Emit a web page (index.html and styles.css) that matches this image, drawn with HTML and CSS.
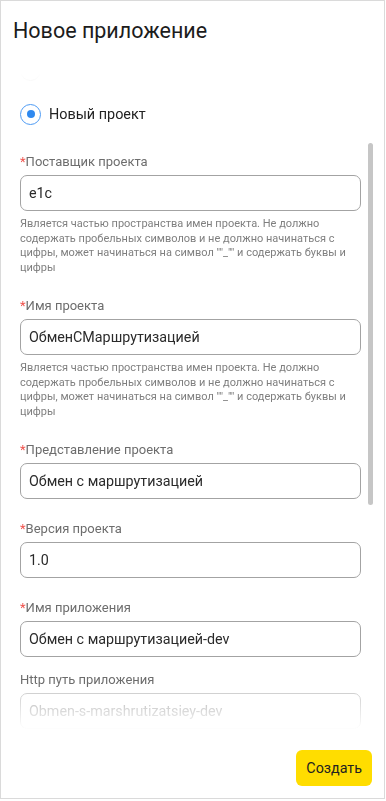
FILE: index.html
```html
<!DOCTYPE html>
<html lang="ru">
<head>
    <meta charset="UTF-8">
    <title>Новое приложение</title>
    <link rel="stylesheet" href="styles.css">
</head>
<body>
    <div class="dialog">
        <div class="dialog-header">
            <h1 class="dialog-title">Новое приложение</h1>
        </div>

        <div class="dialog-body">
            <div class="dialog-scroll">
                <!-- верхний вариант почти скрыт затуханием -->
                <div class="radio">
                    <span class="radio-mark"></span>
                </div>
                <label class="radio radio--checked">
                    <span class="radio-mark"></span>
                    <span class="radio-text">Новый проект</span>
                </label>

                <div class="field field--first">
                    <div class="field-label"><span class="req">*</span>Поставщик проекта</div>
                    <input class="input" type="text" value="e1c">
                    <div class="field-hint">Является частью пространства имен проекта. Не должно содержать пробельных символов и не должно начинаться с цифры, может начинаться на символ ""_"" и содержать буквы и цифры</div>
                </div>

                <div class="field field--after-hint">
                    <div class="field-label"><span class="req">*</span>Имя проекта</div>
                    <input class="input" type="text" value="ОбменСМаршрутизацией">
                    <div class="field-hint">Является частью пространства имен проекта. Не должно содержать пробельных символов и не должно начинаться с цифры, может начинаться на символ ""_"" и содержать буквы и цифры</div>
                </div>

                <div class="field field--after-hint">
                    <div class="field-label"><span class="req">*</span>Представление проекта</div>
                    <input class="input" type="text" value="Обмен с маршрутизацией">
                </div>

                <div class="field">
                    <div class="field-label"><span class="req">*</span>Версия проекта</div>
                    <input class="input" type="text" value="1.0">
                </div>

                <div class="field">
                    <div class="field-label"><span class="req">*</span>Имя приложения</div>
                    <input class="input" type="text" value="Обмен с маршрутизацией-dev">
                </div>

                <div class="field field--optional">
                    <div class="field-label">Http путь приложения</div>
                    <input class="input input--muted" type="text" value="Obmen-s-marshrutizatsiey-dev" readonly>
                </div>
            </div>
            <div class="scroll-thumb"></div>
        </div>

        <div class="dialog-footer">
            <button class="btn-primary" type="button">Создать</button>
        </div>
    </div>
</body>
</html>
```

FILE: styles.css
```css
html, body {
    margin: 0;
    padding: 0;
    background: #ffffff;
}

body {
    font-family: Roboto, "Noto Sans", "Liberation Sans", sans-serif;
    color: #222222;
}

.dialog {
    box-sizing: border-box;
    width: 385px;
    height: 799px;
    border: 1px solid #dadada;
    display: flex;
    flex-direction: column;
    background: #ffffff;
}

.dialog-header {
    padding: 16px 12px 12px;
}

.dialog-title {
    margin: 0;
    font-size: 21.5px;
    line-height: 28px;
    font-weight: 400;
    color: #1c1c1c;
}

/* прокручиваемая часть с затуханием сверху и снизу */
.dialog-body {
    position: relative;
    flex: 1;
    min-height: 0;
}

.dialog-scroll {
    height: 100%;
    overflow: hidden;
    padding: 0 23px 0 19px;
    display: flex;
    flex-direction: column;
    -webkit-mask-image: linear-gradient(
        to bottom,
        transparent 0,
        transparent 16px,
        #000 47px,
        #000 calc(100% - 46px),
        transparent calc(100% - 8px));
    mask-image: linear-gradient(
        to bottom,
        transparent 0,
        transparent 16px,
        #000 47px,
        #000 calc(100% - 46px),
        transparent calc(100% - 8px));
}

.scroll-thumb {
    position: absolute;
    top: 86px;
    right: 11px;
    width: 5px;
    height: 362px;
    border-radius: 3px;
    background: #c6c6c6;
}

.radio {
    display: flex;
    align-items: center;
    gap: 8px;
    height: 26px;
    flex-shrink: 0;
}

.radio + .radio {
    margin-top: 18px;
}

.radio-mark {
    box-sizing: border-box;
    width: 21px;
    height: 21px;
    border-radius: 50%;
    border: 1.5px solid #4d9af3;
    display: flex;
    align-items: center;
    justify-content: center;
    flex-shrink: 0;
}

.radio:first-child .radio-mark {
    border-color: #e6e6e6;
}

.radio--checked .radio-mark::after {
    content: "";
    width: 8px;
    height: 8px;
    border-radius: 50%;
    background: #2f89ef;
}

.radio-text {
    font-size: 14.4px;
    color: #222222;
}

.field {
    display: flex;
    flex-direction: column;
    flex-shrink: 0;
    margin-top: 21px;
}

.field--first {
    margin-top: 26px;
}

.field--after-hint {
    margin-top: 22px;
}

.field--optional {
    margin-top: 14px;
}

.field-label {
    font-size: 13px;
    line-height: 18px;
    color: #6d6d6d;
    margin-bottom: 4px;
}

.req {
    color: #f0504a;
}

.input {
    box-sizing: border-box;
    width: 100%;
    height: 36px;
    margin: 0;
    padding: 0 8px;
    border: 1px solid #a3a3a3;
    border-radius: 7px;
    font-family: inherit;
    font-size: 14.3px;
    color: #2a2a2a;
    background: #ffffff;
    outline: none;
}

.input--muted {
    color: #b3b3b3;
    border-color: #cfcfcf;
}

.field-hint {
    margin-top: 6px;
    font-size: 11px;
    line-height: 14.5px;
    color: #7f7f7f;
}

.dialog-footer {
    display: flex;
    justify-content: flex-end;
    padding: 12px;
}

.btn-primary {
    height: 36px;
    padding: 0 10px;
    border: none;
    border-radius: 6px;
    background: #ffdd00;
    font-family: inherit;
    font-size: 14.3px;
    color: #222222;
    cursor: pointer;
}
```
